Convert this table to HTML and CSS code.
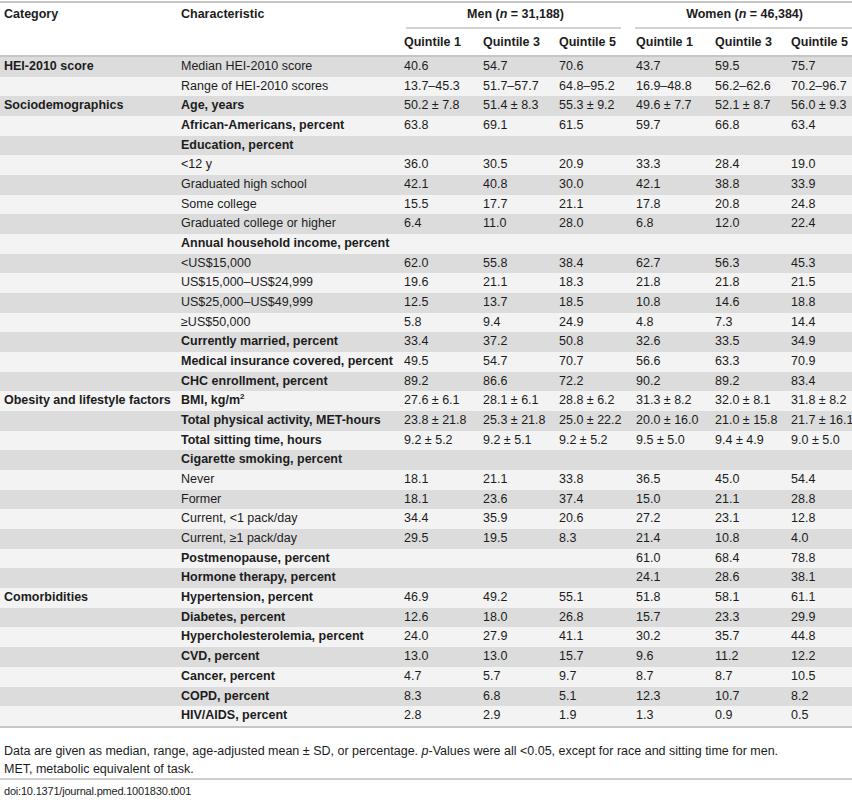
FILE: index.html
```html
<!DOCTYPE html>
<html lang="en">
<head>
    <meta charset="UTF-8">
    <meta name="viewport" content="width=device-width, initial-scale=1.0">
    <title>Table 1</title>
    <link rel="stylesheet" href="styles.css">
</head>
<body>
    <table class="dataTable">
        <colgroup>
            <col class="cCat">
            <col class="cChar">
            <col class="cQ1">
            <col class="cQ3">
            <col class="cQ5">
            <col class="cQ1">
            <col class="cQ3">
            <col class="cLast">
        </colgroup>
        <thead>
            <tr class="headTop">
                <th rowspan="2">Category</th>
                <th rowspan="2">Characteristic</th>
                <th colspan="3" class="grp"><div class="grpInner men">Men (<i>n</i> = 31,188)</div></th>
                <th colspan="3" class="grp"><div class="grpInner women">Women (<i>n</i> = 46,384)</div></th>
            </tr>
            <tr class="headSub">
                <th>Quintile 1</th>
                <th>Quintile 3</th>
                <th>Quintile 5</th>
                <th>Quintile 1</th>
                <th>Quintile 3</th>
                <th>Quintile 5</th>
            </tr>
        </thead>
        <tbody>
            <tr><td class="b">HEI-2010 score</td><td>Median HEI-2010 score</td><td>40.6</td><td>54.7</td><td>70.6</td><td>43.7</td><td>59.5</td><td>75.7</td></tr>
            <tr><td></td><td>Range of HEI-2010 scores</td><td>13.7–45.3</td><td>51.7–57.7</td><td>64.8–95.2</td><td>16.9–48.8</td><td>56.2–62.6</td><td>70.2–96.7</td></tr>
            <tr><td class="b">Sociodemographics</td><td class="b">Age, years</td><td>50.2 ± 7.8</td><td>51.4 ± 8.3</td><td>55.3 ± 9.2</td><td>49.6 ± 7.7</td><td>52.1 ± 8.7</td><td>56.0 ± 9.3</td></tr>
            <tr><td></td><td class="b">African-Americans, percent</td><td>63.8</td><td>69.1</td><td>61.5</td><td>59.7</td><td>66.8</td><td>63.4</td></tr>
            <tr><td></td><td class="b">Education, percent</td><td></td><td></td><td></td><td></td><td></td><td></td></tr>
            <tr><td></td><td>&lt;12 y</td><td>36.0</td><td>30.5</td><td>20.9</td><td>33.3</td><td>28.4</td><td>19.0</td></tr>
            <tr><td></td><td>Graduated high school</td><td>42.1</td><td>40.8</td><td>30.0</td><td>42.1</td><td>38.8</td><td>33.9</td></tr>
            <tr><td></td><td>Some college</td><td>15.5</td><td>17.7</td><td>21.1</td><td>17.8</td><td>20.8</td><td>24.8</td></tr>
            <tr><td></td><td>Graduated college or higher</td><td>6.4</td><td>11.0</td><td>28.0</td><td>6.8</td><td>12.0</td><td>22.4</td></tr>
            <tr><td></td><td class="b">Annual household income, percent</td><td></td><td></td><td></td><td></td><td></td><td></td></tr>
            <tr><td></td><td>&lt;US$15,000</td><td>62.0</td><td>55.8</td><td>38.4</td><td>62.7</td><td>56.3</td><td>45.3</td></tr>
            <tr><td></td><td>US$15,000–US$24,999</td><td>19.6</td><td>21.1</td><td>18.3</td><td>21.8</td><td>21.8</td><td>21.5</td></tr>
            <tr><td></td><td>US$25,000–US$49,999</td><td>12.5</td><td>13.7</td><td>18.5</td><td>10.8</td><td>14.6</td><td>18.8</td></tr>
            <tr><td></td><td>≥US$50,000</td><td>5.8</td><td>9.4</td><td>24.9</td><td>4.8</td><td>7.3</td><td>14.4</td></tr>
            <tr><td></td><td class="b">Currently married, percent</td><td>33.4</td><td>37.2</td><td>50.8</td><td>32.6</td><td>33.5</td><td>34.9</td></tr>
            <tr><td></td><td class="b">Medical insurance covered, percent</td><td>49.5</td><td>54.7</td><td>70.7</td><td>56.6</td><td>63.3</td><td>70.9</td></tr>
            <tr><td></td><td class="b">CHC enrollment, percent</td><td>89.2</td><td>86.6</td><td>72.2</td><td>90.2</td><td>89.2</td><td>83.4</td></tr>
            <tr><td class="b">Obesity and lifestyle factors</td><td class="b">BMI, kg/m<sup>2</sup></td><td>27.6 ± 6.1</td><td>28.1 ± 6.1</td><td>28.8 ± 6.2</td><td>31.3 ± 8.2</td><td>32.0 ± 8.1</td><td>31.8 ± 8.2</td></tr>
            <tr><td></td><td class="b">Total physical activity, MET-hours</td><td>23.8 ± 21.8</td><td>25.3 ± 21.8</td><td>25.0 ± 22.2</td><td>20.0 ± 16.0</td><td>21.0 ± 15.8</td><td>21.7 ± 16.1</td></tr>
            <tr><td></td><td class="b">Total sitting time, hours</td><td>9.2 ± 5.2</td><td>9.2 ± 5.1</td><td>9.2 ± 5.2</td><td>9.5 ± 5.0</td><td>9.4 ± 4.9</td><td>9.0 ± 5.0</td></tr>
            <tr><td></td><td class="b">Cigarette smoking, percent</td><td></td><td></td><td></td><td></td><td></td><td></td></tr>
            <tr><td></td><td>Never</td><td>18.1</td><td>21.1</td><td>33.8</td><td>36.5</td><td>45.0</td><td>54.4</td></tr>
            <tr><td></td><td>Former</td><td>18.1</td><td>23.6</td><td>37.4</td><td>15.0</td><td>21.1</td><td>28.8</td></tr>
            <tr><td></td><td>Current, &lt;1 pack/day</td><td>34.4</td><td>35.9</td><td>20.6</td><td>27.2</td><td>23.1</td><td>12.8</td></tr>
            <tr><td></td><td>Current, ≥1 pack/day</td><td>29.5</td><td>19.5</td><td>8.3</td><td>21.4</td><td>10.8</td><td>4.0</td></tr>
            <tr><td></td><td class="b">Postmenopause, percent</td><td></td><td></td><td></td><td>61.0</td><td>68.4</td><td>78.8</td></tr>
            <tr><td></td><td class="b">Hormone therapy, percent</td><td></td><td></td><td></td><td>24.1</td><td>28.6</td><td>38.1</td></tr>
            <tr><td class="b">Comorbidities</td><td class="b">Hypertension, percent</td><td>46.9</td><td>49.2</td><td>55.1</td><td>51.8</td><td>58.1</td><td>61.1</td></tr>
            <tr><td></td><td class="b">Diabetes, percent</td><td>12.6</td><td>18.0</td><td>26.8</td><td>15.7</td><td>23.3</td><td>29.9</td></tr>
            <tr><td></td><td class="b">Hypercholesterolemia, percent</td><td>24.0</td><td>27.9</td><td>41.1</td><td>30.2</td><td>35.7</td><td>44.8</td></tr>
            <tr><td></td><td class="b">CVD, percent</td><td>13.0</td><td>13.0</td><td>15.7</td><td>9.6</td><td>11.2</td><td>12.2</td></tr>
            <tr><td></td><td class="b">Cancer, percent</td><td>4.7</td><td>5.7</td><td>9.7</td><td>8.7</td><td>8.7</td><td>10.5</td></tr>
            <tr><td></td><td class="b">COPD, percent</td><td>8.3</td><td>6.8</td><td>5.1</td><td>12.3</td><td>10.7</td><td>8.2</td></tr>
            <tr><td></td><td class="b">HIV/AIDS, percent</td><td>2.8</td><td>2.9</td><td>1.9</td><td>1.3</td><td>0.9</td><td>0.5</td></tr>
        </tbody>
    </table>

    <div class="notes">
        <p>Data are given as median, range, age-adjusted mean ± SD, or percentage. <i>p</i>-Values were all &lt;0.05, except for race and sitting time for men.</p>
        <p>MET, metabolic equivalent of task.</p>
    </div>
    <p class="doi">doi:10.1371/journal.pmed.1001830.t001</p>
</body>
</html>
```

FILE: styles.css
```css
body {
    margin: 0;
    background-color: #fff;
    color: #1c1c1c;
    font-family: "Liberation Sans", Arial, sans-serif;
    font-size: 12.5px;
}
.dataTable {
    width: 852px;
    margin-top: 1px;
    table-layout: fixed;
    border-collapse: collapse;
    border-top: 2px solid #c6c6c6;
    border-bottom: 2px solid #c6c6c6;
}
.cCat { width: 177px; }
.cChar { width: 223px; }
.cQ1 { width: 79px; }
.cQ3 { width: 76px; }
.cQ5 { width: 77px; }
.cLast { width: 67px; }

th, td {
    padding: 0 0 0 4px;
    text-align: left;
    white-space: nowrap;
    vertical-align: top;
}
th {
    font-weight: bold;
    line-height: 16px;
}
.headTop th {
    padding-top: 3px;
}
.headTop th.grp {
    padding: 3px 0 0 0;
    text-align: center;
}
.grpInner {
    padding-bottom: 5px;
    border-bottom: 2px solid #d2d2d2;
}
.grpInner.men {
    margin: 0 11px 0 6px;
    padding-left: 4px;
}
.grpInner.women {
    margin-left: 3px;
}
.headSub th {
    padding-top: 5px;
    padding-bottom: 5px;
}
thead tr.headSub {
    border-bottom: 2px solid #c6c6c6;
}
tbody td {
    height: 19.67px;
    line-height: 19.67px;
}
tbody tr:nth-child(odd) {
    background-color: #dcdcdd;
}
tbody tr:nth-child(even) {
    background-color: #f3f3f3;
}
.b {
    font-weight: bold;
}
sup {
    font-size: 8px;
    line-height: 0;
}
.notes {
    margin-top: 14px;
    padding: 0 4px;
    border-bottom: 2px solid #cfcfcf;
}
.notes p {
    margin: 0;
    line-height: 18px;
}
.doi {
    margin: 4px 0 0;
    padding-left: 4px;
    font-size: 11px;
    line-height: 14px;
    letter-spacing: -0.2px;
}
```
